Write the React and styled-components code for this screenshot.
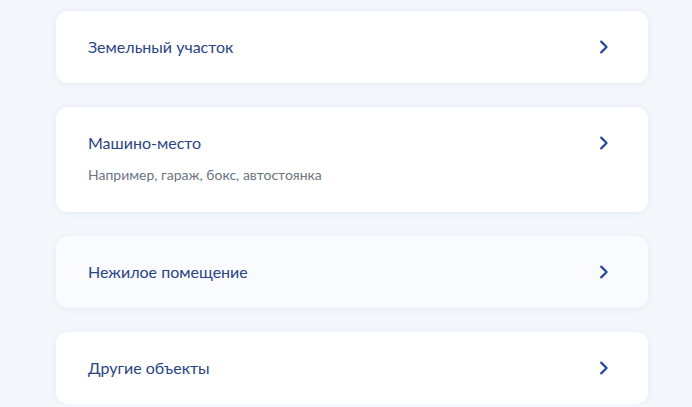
import React from "react";
import styled, { createGlobalStyle } from "styled-components";

const COLORS = {
  page: "#f4f7fc",
  card: "#ffffff",
  cardHover: "#f9fbfe",
  title: "#2a4584",
  hint: "#6b7580",
  chevron: "#22489a",
};

const GlobalStyle = createGlobalStyle`
  html, body {
    margin: 0;
    padding: 0;
    background: ${COLORS.page};
    font-family: Lato, "Noto Sans", sans-serif;
  }
`;

const items = [
  { title: "Земельный участок" },
  { title: "Машино-место", hint: "Например, гараж, бокс, автостоянка" },
  { title: "Нежилое помещение", active: true },
  { title: "Другие объекты" },
];

const ChevronIcon = () => (
  <svg width="10" height="14" viewBox="0 0 10 14" fill="none">
    <path
      d="M2.2 1.6L7.6 7L2.2 12.4"
      stroke={COLORS.chevron}
      strokeWidth="2.2"
      strokeLinecap="round"
      strokeLinejoin="round"
    />
  </svg>
);

const App = () => {
  return (
    <>
      <GlobalStyle />
      <StyledList>
        {items.map((item) => (
          <Card key={item.title} $active={item.active} $hasHint={!!item.hint}>
            <div className="card-text">
              <div className="card-title">{item.title}</div>
              {item.hint && <div className="card-hint">{item.hint}</div>}
            </div>
            <div className="card-arrow">
              <ChevronIcon />
            </div>
          </Card>
        ))}
      </StyledList>
    </>
  );
};

const StyledList = styled.div`
  display: flex;
  flex-direction: column;
  gap: 24px;
  width: 592px;
  padding: 11px 0 0 56px;
`;

const Card = styled.div`
  display: flex;
  align-items: flex-start;
  justify-content: space-between;
  padding: 24px 39px ${(p) => (p.$hasHint ? "27px" : "24px")} 32px;
  border-radius: 12px;
  background: ${(p) => (p.$active ? COLORS.cardHover : COLORS.card)};
  box-shadow: 0 1px 6px rgba(200, 212, 232, 0.35);
  cursor: pointer;

  .card {
    &-title {
      font-size: 16px;
      line-height: 24px;
      color: ${COLORS.title};
    }
    &-hint {
      margin-top: 10px;
      font-size: 14px;
      line-height: 20px;
      color: ${COLORS.hint};
    }
    &-arrow {
      display: flex;
      align-items: center;
      height: 24px;
    }
  }
`;

export default App;
